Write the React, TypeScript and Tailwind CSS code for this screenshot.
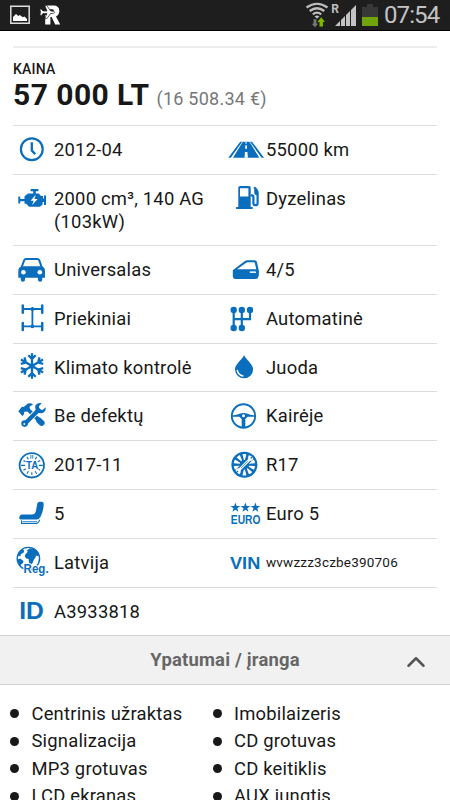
import React from 'react';
import { ChevronUp } from 'lucide-react';

const BLUE = '#0a6ebd';

const Icon: React.FC<{ children: React.ReactNode }> = ({ children }) => (
  <svg width="41" height="34" viewBox="0 0 41 34" fill={BLUE} fontFamily="Liberation Sans, sans-serif" className="mt-[6px] shrink-0 overflow-visible">
    {children}
  </svg>
);

const ClockIcon = () => (
  <Icon>
    <circle cx="18.8" cy="17.3" r="10.9" fill="none" stroke={BLUE} strokeWidth="2.2" />
    <path d="M18.8 10.2v8.4l3.4 3.5" fill="none" stroke={BLUE} strokeWidth="2.3" />
  </Icon>
);

const RoadIcon = () => (
  <Icon>
    <path d="M3.3 25.7 15.2 9.7h2L5.8 25.7zM17.8 9.7h6.6l9.9 16H8zM25 9.7h2l12 16h-2.5z" />
    <path d="M20.6 9.7h.9l.1 2h-1.1zM20.4 13.3h1.4l.3 3.5h-2zM20 20h2.4l.5 5.7h-3.4z" fill="#fff" />
  </Icon>
);

const EngineIcon = () => (
  <Icon>
    <path d="M17.6 8h7.8v2.2h-2.6v2.2h3l2.2 2.6H30v2.6h1v-3h2v9.5h-2v-3h-1.4v2.4L27 25.8H16l-2.8-3h-1.7v-2.6H7.2v2.2H5.3v-7h1.9v2.5h4.3v-2.6l3.5-2.9h5.2v-2.2h-2.6z" />
    <path d="m22.8 13.7-5.2 6h3l-1.4 4.4 5.4-6.2h-3.2z" fill="#fff" />
  </Icon>
);

const FuelIcon = () => (
  <Icon>
    <path d="M15 5h9a1.7 1.7 0 0 1 1.7 1.7V26h2v2H11.1v-2h2.2V6.7A1.7 1.7 0 0 1 15 5zm0 2.3v8.2h8.4V7.3z" fillRule="evenodd" />
    <path d="M25.7 14.3h1.2q1.5 0 1.5 1.7v6.2q0 2 2.1 2t2.1-2V11.5q0-1.8-3.4-5.2" fill="none" stroke={BLUE} strokeWidth="2.2" />
    <path d="M29.2 8.2h2.2l1.6 2.6v3.4h-1.5q-2.4-.4-2.3-2.5z" />
  </Icon>
);

const CarIcon = () => (
  <Icon>
    <path d="M8.6 15.5 11 8.6Q11.6 7 13.3 7h10.8q1.7 0 2.3 1.6l2.4 6.9" fill="none" stroke={BLUE} strokeWidth="2" />
    <path d="M8.6 14.3h20.2q3.2 1.4 3.2 4.4v7h-2.7v1.8a2.2 2.2 0 0 1-4.4 0v-1.8H12.1v1.8a2.2 2.2 0 0 1-4.4 0v-1.8H5.3v-7q0-3 3.3-4.4z" />
    <circle cx="10.4" cy="20.2" r="2.3" fill="#fff" />
    <circle cx="26.8" cy="20.2" r="2.3" fill="#fff" />
  </Icon>
);

const DoorIcon = () => (
  <Icon>
    <path d="m7.8 18.2 11.8-9q1.2-.9 2.8-.9h7.2q2 0 2.4 2l1.8 8.2q.4 3-.3 6-.5 2.5-3 2.5H10.1q-2.3 0-2.3-2.4zm4.3-.9h19.2l-1.5-6.400q-.1-.6-.8-.6h-6.400q-.8 0-1.400.4z" fillRule="evenodd" />
    <path d="M24.8 19.4h6.1v1.5h-6.1z" fill="#fff" />
  </Icon>
);

const AxleIcon = () => (
  <Icon>
    <path d="M10 8h18.8M10 25.3h18.8M19.4 8v17.3" fill="none" stroke={BLUE} strokeWidth="1.8" />
    <path d="M9.8 4.6v7.2M29.2 4.6v7.2M9.8 21.9v7.2M29.2 21.9v7.2" fill="none" stroke={BLUE} strokeWidth="2.5" strokeLinecap="round" />
    <circle cx="19.4" cy="8" r="1.9" />
    <circle cx="19.4" cy="25.3" r="1.9" />
  </Icon>
);

const GearboxIcon = () => (
  <Icon>
    <path d="M8.7 9v18M16.8 9v18M25 9v9.2H8.7" fill="none" stroke={BLUE} strokeWidth="2.2" />
    {[[8.7, 9], [16.8, 9], [25, 9], [8.7, 27], [16.8, 27]].map(([x, y]) => (
      <circle key={`${x}-${y}`} cx={x} cy={y} r="3.2" />
    ))}
  </Icon>
);

const SnowIcon = () => (
  <Icon>
    <g fill="none" stroke={BLUE} strokeWidth="2.3">
      {[0, 60, 120, 180, 240, 300].map(a => (
        <path key={a} d="M19 16V3.2M15.3 5.2l3.7 3.7 3.7-3.7" transform={`rotate(${a} 19 16)`} />
      ))}
    </g>
    <circle cx="19" cy="16" r="2.6" />
  </Icon>
);

const DropIcon = () => (
  <Icon>
    <path d="M19.1 5c1 3.6 9 9 9 14.3a9 9 0 0 1-18.1 0C10 14 18.1 8.6 19.1 5z" />
    <path d="M12.3 20.5q1 4.5 5.6 5.4" fill="none" stroke="#fff" strokeWidth="1.5" strokeLinecap="round" />
  </Icon>
);

const ToolsIcon = () => (
  <Icon>
    <path d="m5.3 13.2 3.6-4.4 1.8.2 4.2-3.4q3-.9 5.2.6l-3.6 2.5.5 2.3L29.8 22.8l-3.2 3L14.3 13.5l-2.6.2-.8.8.3 1.6-1.9 1.9z" />
    <path d="m11.8 25.7 15-15" fill="none" stroke="#fff" strokeWidth="6" />
    <path d="m11.8 25.7 15-15" fill="none" stroke={BLUE} strokeWidth="4.2" />
    <path d="M32.7 9.2 29.5 12l-3-.7-.6-3 2.8-3.1q-5-.7-6.6 3.2l.6 4.1 2.7 2.600 3.6.1q4.3-1.6 3.7-6z" />
    <circle cx="11.6" cy="25.6" r="3.3" />
    <circle cx="11.3" cy="26" r=".9" fill="#fff" />
    <path d="m26.2 22.6 2.4 2.3" stroke={BLUE} strokeWidth="6" strokeLinecap="round" />
  </Icon>
);

const SteeringIcon = () => (
  <Icon>
    <circle cx="18.5" cy="18" r="11.7" fill="none" stroke={BLUE} strokeWidth="1.9" />
    <path d="M7 17.5q5-.5 8.2-2 3.3-1.2 6.6 0 3.2 1.5 8.2 2v1.3h-7.4l-2.3 2.2v8.6h-3.600V21l-2.300-2.200H7z" />
    <circle cx="18.5" cy="17.8" r="1.5" fill="#fff" />
  </Icon>
);

const InspectionIcon = () => (
  <Icon>
    <circle cx="18.8" cy="18.3" r="12.2" fill="none" stroke={BLUE} strokeWidth="1.8" />
    {[30, 60, 120, 150, 180, 210, 240, 300, 330].map(a => (
      <path key={a} d="M18.8 8.6v2.8" stroke={BLUE} strokeWidth="1.1" transform={`rotate(${a} 18.8 18.3)`} />
    ))}
    <path d="M17.9 8v3.600M19.800 8v3.600" stroke={BLUE} strokeWidth=".9" />
    <path d="M8 18.300h4M25.800 18.300h4" stroke={BLUE} strokeWidth="1.300" />
    <text x="12.900" y="22" fontSize="10.300" fontWeight="700" textLength="12.300" lengthAdjust="spacingAndGlyphs" stroke="#fff" strokeWidth="1" paintOrder="stroke">TA</text>
  </Icon>
);

const WheelIcon = () => (
  <Icon>
    <circle cx="19.4" cy="17.7" r="13" />
    {[0, 36, 72, 108, 144, 180, 216, 252, 288, 324].map(a => (
      <path key={a} d="m18.9 13-1.5-5.8q2-.6 4 0L19.9 13z" fill="#fff" transform={`rotate(${a} 19.4 17.7)`} />
    ))}
    <path d="m13.2 23.9 12.4-12.4" stroke={BLUE} strokeWidth="5.2" />
    <path d="m13.2 23.9 12.4-12.4" stroke="#fff" strokeWidth="2.6" />
    <circle cx="13.3" cy="23.8" r="2.5" fill="#fff" />
    <circle cx="25.5" cy="11.6" r="2.5" fill="#fff" />
    <path d="m11 26 2-2M25.8 11.3l2-2" stroke={BLUE} strokeWidth="1.3" />
    <path d="m16 21.1 6.8-6.8" stroke={BLUE} strokeWidth=".7" />
  </Icon>
);

const SeatIcon = () => (
  <Icon>
    <path d="M24.3 7.6q.4-1.9 2.5-1.9h1.8q2.2 0 2.1 2.2-.1 7-3 12.5-1.3 2.6-4 3.2H7.500q-1.400-.2-1.200-2 .3-3.100 3.200-3h9.300q3.300 0 4.100-3.600z" />
    <path d="M8.500 24.300v3.100h14.800q1.500-.1 2.300-1.400l1.200-2.300" fill="none" stroke={BLUE} strokeWidth="1.100" />
    <path d="M9.500 25.500h14.500" stroke={BLUE} strokeWidth=".7" />
  </Icon>
);

const EuroIcon = () => (
  <Icon>
    {[10.4, 20.4, 30.4].map(x => (
      <path key={x} d="m0-5 1.200 3.500h3.700l-3 2.200L3 4.200 0 2.100-3 4.200-1.900.7l-3-2.200h3.700z" transform={`translate(${x} 11.6)`} />
    ))}
    <text x="5.800" y="27.900" fontSize="12" fontWeight="700" textLength="29.600" lengthAdjust="spacingAndGlyphs">EURO</text>
  </Icon>
);

const GlobeIcon = () => (
  <Icon>
    <circle cx="15.4" cy="13.6" r="11.2" fill="none" stroke={BLUE} strokeWidth="1.4" />
    <path d="M4.800 10.500q1-3.800 4.700-6.200l1.800 1.400-.8 2-2.500 1.300-.8 2.500zM4.500 14.500l2.700-1 3.300 2.500-.5 2-2.200 1.700-.2 2.400q-2.800-3-3.100-7.600z" />
    <path d="m12.500 9.200 2.200-2.500-.8-1.300 2.700-1.900 4.700 0q4 2 5 6.500l-1.500 1.200-1.800-.8-.5 2-1.800 2.600-1.300 3.500-2.200 1.500-1.200-2.600-.4-3.300-2.800-.8-1-2.300z" />
    <text x="10.600" y="28.200" fontSize="12.300" fontWeight="700" textLength="25" lengthAdjust="spacingAndGlyphs" stroke="#fff" strokeWidth="2" paintOrder="stroke">Reg.</text>
  </Icon>
);

const VinIcon = () => (
  <Icon>
    <text x="5" y="23.8" fontSize="17.2" fontWeight="700" textLength="30.3" lengthAdjust="spacingAndGlyphs">VIN</text>
  </Icon>
);

const IdIcon = () => (
  <Icon>
    <text x="6.2" y="24.9" fontSize="23.6" fontWeight="700" textLength="24.6" lengthAdjust="spacingAndGlyphs">ID</text>
  </Icon>
);

type Spec = { icon: React.ReactNode; label: string; className?: string };

const rows: { height: string; items: Spec[] }[] = [
  { height: 'h-[49px]', items: [{ icon: <ClockIcon />, label: '2012-04' }, { icon: <RoadIcon />, label: '55000 km' }] },
  { height: 'h-[71px]', items: [{ icon: <EngineIcon />, label: '2000 cm³, 140 AG (103kW)' }, { icon: <FuelIcon />, label: 'Dyzelinas' }] },
  { height: 'h-[49px]', items: [{ icon: <CarIcon />, label: 'Universalas' }, { icon: <DoorIcon />, label: '4/5' }] },
  { height: 'h-[49px]', items: [{ icon: <AxleIcon />, label: 'Priekiniai' }, { icon: <GearboxIcon />, label: 'Automatinė' }] },
  { height: 'h-[48px]', items: [{ icon: <SnowIcon />, label: 'Klimato kontrolė' }, { icon: <DropIcon />, label: 'Juoda' }] },
  { height: 'h-[49px]', items: [{ icon: <ToolsIcon />, label: 'Be defektų' }, { icon: <SteeringIcon />, label: 'Kairėje' }] },
  { height: 'h-[49px]', items: [{ icon: <InspectionIcon />, label: '2017-11' }, { icon: <WheelIcon />, label: 'R17' }] },
  { height: 'h-[49px]', items: [{ icon: <SeatIcon />, label: '5' }, { icon: <EuroIcon />, label: 'Euro 5' }] },
  { height: 'h-[49px]', items: [{ icon: <GlobeIcon />, label: 'Latvija' }, { icon: <VinIcon />, label: 'wvwzzz3czbe390706', className: 'text-[13.5px] tracking-[0.2px]' }] },
  { height: 'h-[48px]', items: [{ icon: <IdIcon />, label: 'A3933818' }] },
];

const features = [
  ['Centrinis užraktas', 'Signalizacija', 'MP3 grotuvas', 'LCD ekranas'],
  ['Imobilaizeris', 'CD grotuvas', 'CD keitiklis', 'AUX jungtis'],
];

const StatusBar = () => (
  <header className="flex h-[31px] shrink-0 items-center border-b border-black bg-[#1e1e1e] pr-[11px] pl-[10px]">
    <svg width="20" height="20" viewBox="0 0 20 20" className="shrink-0">
      <path d="M.8 1.3h18.4v17H.8z" fill="none" stroke="#ddd" strokeWidth="1.5" />
      <path d="M3 16v-4l3-3 2.3 2 1.5-1 3 2.2 1.7-.6 2.5 2.4v2z" fill="#fff" />
    </svg>
    <svg width="22" height="22" viewBox="0 0 22 22" className="ml-[9px] shrink-0" fill="#fff">
      <path d="M7 1.5h7.500q5.800 0 5.800 5.500 0 4-3.300 5.400l4.200 8.100h-5l-3.600-7.400h-1.200v7.400H6.200V11h3l4-1.800q1.800-.4 1.800-2.200 0-1.800-1.800-1.800H10z" />
      <path d="m.8 5.200 1.400-.2 1.800 2h4L5.800 1.500h2L11.700 7q4-.2 4 1.200t-4 1.300l-3.900 5.200h-2L8 9.500H4l-1.800 2-1.400-.2.8-3z" stroke="#1e1e1e" strokeWidth=".7" />
    </svg>
    <div className="ml-auto flex items-center">
      <svg width="24" height="26" viewBox="0 0 24 26">
        <g fill="none" stroke="#bebebe" strokeWidth="2.2">
          <path d="M1.5 5.5q10.5-7.5 21 0M4.7 9q7.3-5.5 14.600 0M7.800 12.400q4.200-3.400 8.400 0" />
        </g>
        <path d="m9.5 14.3 2.5 2.5 2.5-2.5q-2.5-1.5-5 0z" fill="#bebebe" />
        <path d="M8.3 17h3.3v4.5h2L10 25.5l-3.7-4h2z" fill="#777" stroke="#1e1e1e" strokeWidth=".4" />
        <path d="M14.5 24.5h3.4v-4.6h2.1l-3.8-4.6-3.8 4.6h2.1z" fill="#80b800" />
      </svg>
      <span className="-mt-[12px] ml-[2px] text-[12px] leading-3 font-bold text-[#bebebe]">R</span>
      <svg width="22" height="23" viewBox="0 0 22 23" className="-ml-[4px]" fill="#c4c4c4">
        <path d="M0 22 5 17v5zM6 16l4-4v10H6zM11 11l4-4v15h-4zM16 6l5-5v21h-5z" />
      </svg>
      <svg width="16" height="23" viewBox="0 0 16 23" className="ml-[5px]">
        <path d="M5 0h6v3h5v10H0V3h5z" fill="#383838" />
        <path d="M0 13h16v9H0z" fill="#71a409" />
      </svg>
      <span className="ml-[6px] w-[55px] text-[24px] leading-[30px] tracking-[-0.9px] whitespace-nowrap text-[#c3c3c3]">07:54</span>
    </div>
  </header>
);

export default function App() {
  return (
    <div className="flex h-[800px] w-[450px] flex-col overflow-hidden bg-white font-['Roboto',sans-serif] text-[#181818]">
      <StatusBar />

      <main className="flex shrink-0 flex-col px-[13px] pt-[15px]">
        {/* Price */}
        <section className="h-[79px] border-t-2 border-[#ededed] pt-[12px]">
          <p className="text-[14px] leading-[18px] font-medium tracking-[0.2px]">KAINA</p>
          <p className="flex items-baseline leading-[34px]">
            <span className="text-[30px] font-bold tracking-[0.45px]">57 000 LT</span>
            <span className="ml-[7px] text-[18px] tracking-[0.25px] text-[#777]">(16 508.34 €)</span>
          </p>
        </section>

        {/* Specs */}
        {rows.map(row => (
          <div key={row.items[0].label} className={`grid grid-cols-[212px_212px] border-t border-[#dcdcdc] ${row.height}`}>
            {row.items.map(item => (
              <div key={item.label} className="flex items-start">
                {item.icon}
                <span className={`mt-[12px] leading-[23px] ${item.className ?? 'text-[18.4px] tracking-[0.22px]'}`}>{item.label}</span>
              </div>
            ))}
          </div>
        ))}
      </main>

      {/* Features */}
      <div className="grid h-[50px] shrink-0 grid-cols-[1fr_auto_1fr] items-center border-y border-[#d2d2d2] bg-[#f1f1f1]">
        <h2 className="col-start-2 text-[18.4px] font-bold tracking-[0.2px] text-[#666]">Ypatumai / įranga</h2>
        <ChevronUp className="mt-1 mr-[19px] size-[30px] justify-self-end text-[#555]" />
      </div>
      <div className="grid grid-cols-[202.5px_1fr] pt-[15px] pl-[10px]">
        {features.map(list => (
          <ul key={list[0]}>
            {list.map(name => (
              <li key={name} className="flex h-[27.5px] items-center gap-[12.5px] text-[18.4px] tracking-[0.2px]">
                <span className="size-[9px] rounded-full bg-[#181818]" />
                {name}
              </li>
            ))}
          </ul>
        ))}
      </div>
    </div>
  );
}
